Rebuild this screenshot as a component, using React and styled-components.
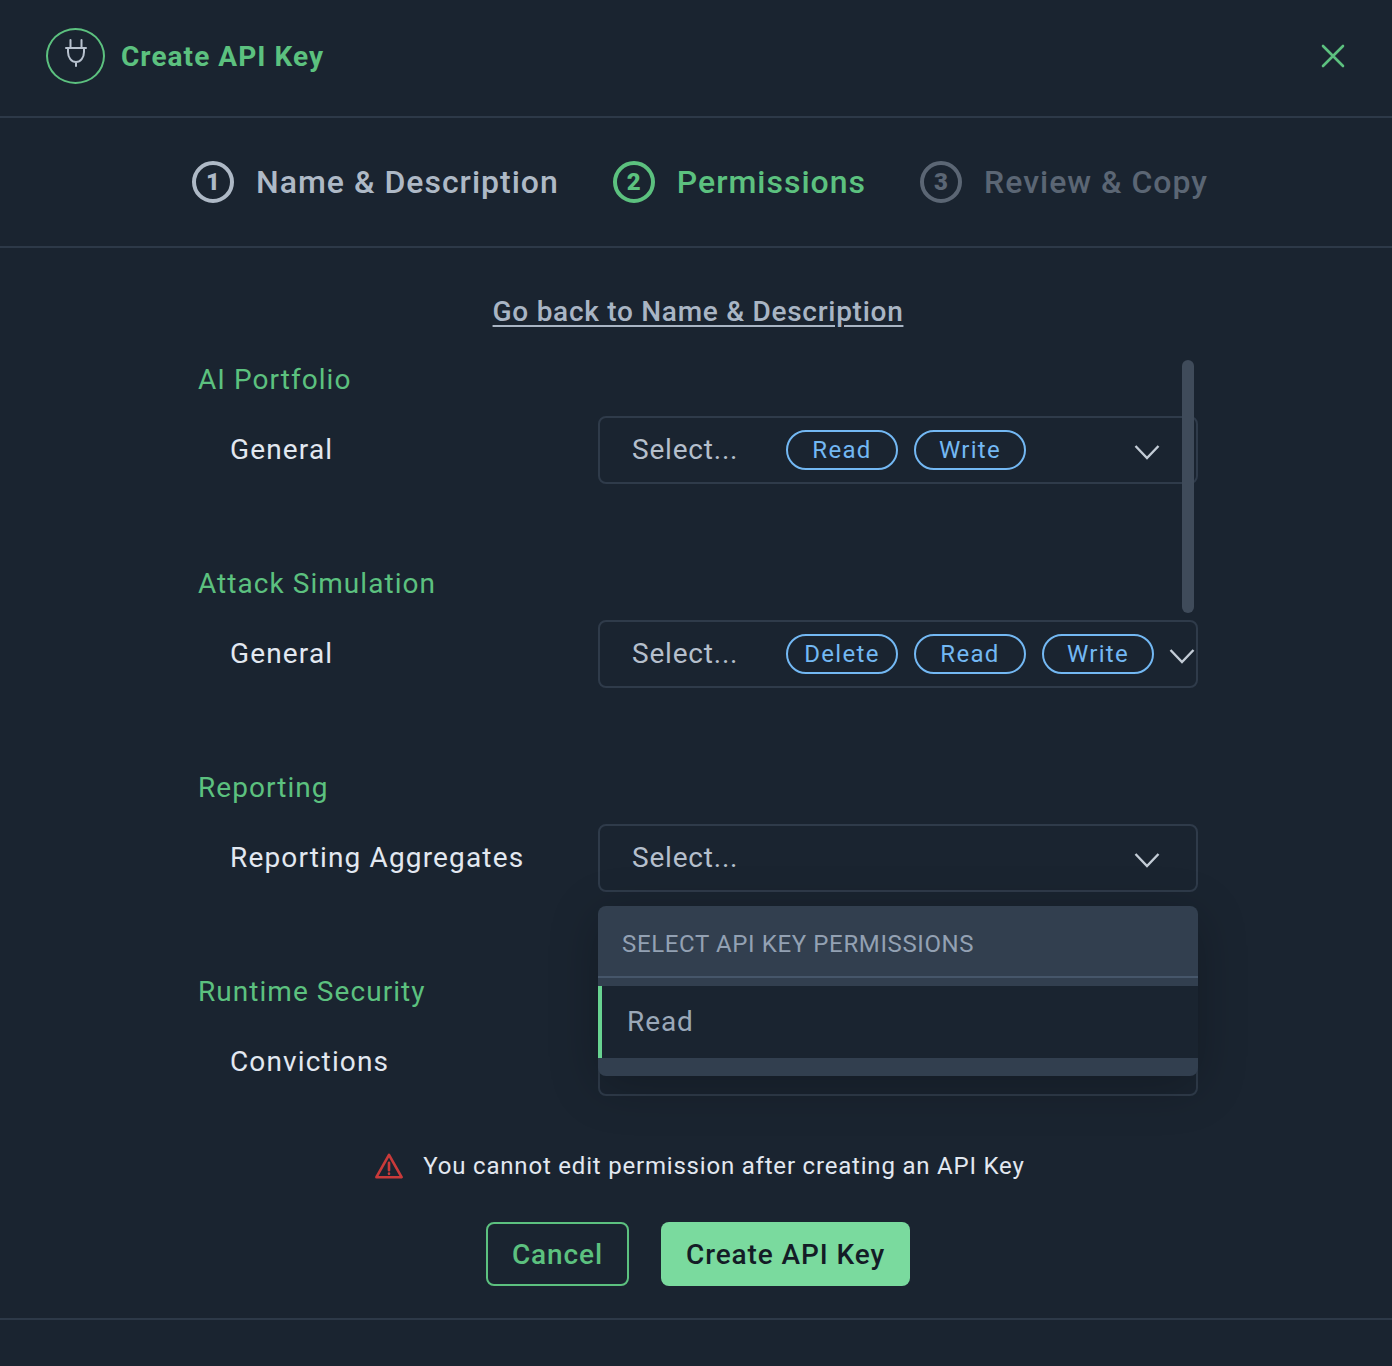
import React from 'react'
import styled, { createGlobalStyle } from 'styled-components'

const GlobalStyle = createGlobalStyle`
  html, body { margin: 0; padding: 0; background: #1a2430; }
  body { font-family: Roboto, "Liberation Sans", sans-serif; }
  * { box-sizing: border-box; }
`

const Page = styled.div`
  width: 1392px;
  height: 1366px;
  overflow: hidden;
  background: #1a2430;
  color: #e2e8f0;
`
const Header = styled.header`
  height: 118px;
  display: flex;
  align-items: center;
  padding: 0 46px 4px 46px;
  border-bottom: 2px solid #2d3948;
`
const PlugBadge = styled.div`
  width: 59px;
  height: 56px;
  border: 2px solid #5cc17f;
  border-radius: 50%;
  display: flex;
  align-items: center;
  justify-content: center;
  margin-right: 16px;
`
const Title = styled.h1`
  flex: 1;
  margin: 0;
  font-size: 28px;
  font-weight: 700;
  letter-spacing: 1.05px;
  color: #5cc17f;
`
const CloseButton = styled.button`
  border: 0;
  padding: 0;
  background: none;
  display: flex;
`
const Steps = styled.nav`
  height: 130px;
  display: flex;
  align-items: center;
  justify-content: center;
  gap: 54px;
  padding-left: 8px;
  border-bottom: 2px solid #2d3948;
`
const Step = styled.div`
  display: flex;
  align-items: center;
  gap: 22px;
  font-size: 32px;
  font-weight: 500;
  letter-spacing: 1px;
  color: ${p => p.$color};
`
const StepNumber = styled.span`
  width: 42px;
  height: 42px;
  border: 4px solid currentColor;
  border-radius: 50%;
  display: flex;
  align-items: center;
  justify-content: center;
  font-size: 24px;
  font-weight: 900;
  letter-spacing: 0;
`
const Content = styled.main`
  width: 1000px;
  margin-left: 198px;
`
const BackLink = styled.a`
  display: block;
  height: 112px;
  padding-top: 47px;
  text-align: center;
  font-size: 28px;
  font-weight: 500;
  line-height: 34px;
  letter-spacing: 0.72px;
  color: #a9b5c4;
  text-decoration: underline;
  text-underline-offset: 4px;
`
const Form = styled.div`
  position: relative;
  display: flex;
  flex-direction: column;
  gap: 80px;
`
const ScrollThumb = styled.div`
  position: absolute;
  top: 0;
  right: 4px;
  width: 12px;
  height: 253px;
  border-radius: 6px;
  background: #3f4b5a;
  z-index: 1;
`
const SectionTitle = styled.h2`
  margin: 0 0 16px;
  height: 40px;
  font-size: 28px;
  line-height: 40px;
  font-weight: 400;
  letter-spacing: 1.05px;
  color: #5cc17f;
`
const Row = styled.div`
  display: flex;
  align-items: center;
`
const RowLabel = styled.div`
  width: 400px;
  padding: 0 0 2px 32px;
  font-size: 28px;
  letter-spacing: 1.15px;
  color: #e2e8f0;
`
const Select = styled.div`
  position: relative;
  width: 600px;
  height: 68px;
  display: flex;
  align-items: center;
  padding: 0 36px 0 32px;
  border: 2px solid #2f3b4a;
  border-radius: 8px;
`
const Placeholder = styled.span`
  width: 154px;
  flex: none;
  padding-bottom: 2px;
  font-size: 28px;
  letter-spacing: 0.8px;
  color: #b5bfcc;
`
const Chips = styled.div`
  flex: 1 0 auto;
  display: flex;
  gap: 16px;
`
const Chip = styled.span`
  width: 112px;
  height: 40px;
  display: flex;
  align-items: center;
  justify-content: center;
  border: 2px solid #73b8f3;
  border-radius: 20px;
  font-size: 24px;
  letter-spacing: 1.3px;
  color: #73b8f3;
`
const Chevron = styled.svg`
  flex: none;
  margin: 3px 0 0 15px;
`
const Menu = styled.div`
  position: absolute;
  top: 80px;
  left: -2px;
  width: 600px;
  height: 170px;
  z-index: 2;
  border-radius: 8px;
  background: #323f4f;
  box-shadow: 0 10px 50px rgba(0, 0, 0, 0.24);
`
const MenuHeading = styled.div`
  height: 72px;
  display: flex;
  align-items: center;
  padding: 6px 0 0 24px;
  border-bottom: 2px solid #46566a;
  font-size: 24px;
  letter-spacing: 0.63px;
  color: #93a1b3;
`
const MenuOption = styled.div`
  height: 72px;
  margin-top: 8px;
  display: flex;
  align-items: center;
  padding: 0 0 2px 25px;
  border-left: 4px solid #68d391;
  background: #1a2430;
  font-size: 28px;
  letter-spacing: 0.9px;
  color: #9aa8b9;
`
const Warning = styled.div`
  margin-top: 52px;
  height: 36px;
  display: flex;
  align-items: center;
  justify-content: center;
  gap: 20px;
  padding-left: 4px;
  font-size: 24px;
  letter-spacing: 0.8px;
  color: #e2e8f0;
`
const Actions = styled.div`
  margin-top: 38px;
  display: flex;
  justify-content: center;
  gap: 32px;
`
const CancelButton = styled.button`
  width: 143px;
  height: 64px;
  border: 2px solid #5cc17f;
  border-radius: 8px;
  background: none;
  font-family: inherit;
  font-size: 28px;
  font-weight: 500;
  letter-spacing: 0.9px;
  color: #5cc17f;
`
const CreateButton = styled.button`
  width: 249px;
  height: 64px;
  border: 0;
  border-radius: 8px;
  background: #7ada9e;
  font-family: inherit;
  font-size: 28px;
  font-weight: 500;
  letter-spacing: 0.9px;
  color: #141c26;
`
const Footer = styled.div`
  margin-top: 32px;
  border-top: 2px solid #2d3948;
`

const sections = [
  { title: 'AI Portfolio', label: 'General', chips: ['Read', 'Write'] },
  { title: 'Attack Simulation', label: 'General', chips: ['Delete', 'Read', 'Write'] },
  { title: 'Reporting', label: 'Reporting Aggregates', chips: [], open: true },
  { title: 'Runtime Security', label: 'Convictions', chips: [], hidden: true },
]

const App = () => {
  return (
    <Page>
      <GlobalStyle />
      <Header>
        <PlugBadge>
          <svg width="24" height="28" viewBox="0 0 24 28" fill="none" stroke="#b8c2cf" strokeWidth="2" strokeLinecap="round" strokeLinejoin="round" style={{ marginTop: -6 }}>
            <path d="M6.500 1v8M17.500 1v8M2 9h20M4 9v4c0 5.500 3.500 10 8 10s8-4.500 8-10V9M12 23v4" />
          </svg>
        </PlugBadge>
        <Title>Create API Key</Title>
        <CloseButton aria-label="Close">
          <svg width="26" height="26" viewBox="0 0 26 26" fill="none" stroke="#5cc17f" strokeWidth="2.6" strokeLinecap="round">
            <path d="M3 3l20 20M23 3L3 23" />
          </svg>
        </CloseButton>
      </Header>
      <Steps>
        <Step $color="#aeb9c6"><StepNumber>1</StepNumber>Name &amp; Description</Step>
        <Step $color="#5cc17f"><StepNumber>2</StepNumber>Permissions</Step>
        <Step $color="#5b6674"><StepNumber>3</StepNumber>Review &amp; Copy</Step>
      </Steps>
      <Content>
        <BackLink>Go back to Name &amp; Description</BackLink>
        <Form>
          <ScrollThumb />
          {sections.map((s) => (
            <section key={s.title}>
              <SectionTitle>{s.title}</SectionTitle>
              <Row>
                <RowLabel>{s.label}</RowLabel>
                <Select>
                  {!s.hidden && <Placeholder>Select...</Placeholder>}
                  <Chips>
                    {s.chips.map((c) => <Chip key={c}>{c}</Chip>)}
                  </Chips>
                  {!s.hidden && (
                    <Chevron width="26" height="16" viewBox="0 0 26 16" fill="none" stroke="#c3ccd6" strokeWidth="2.4">
                      <path d="M1.500 2L13 14 24.500 2" />
                    </Chevron>
                  )}
                  {s.open && (
                    <Menu>
                      <MenuHeading>SELECT API KEY PERMISSIONS</MenuHeading>
                      <MenuOption>Read</MenuOption>
                    </Menu>
                  )}
                </Select>
              </Row>
            </section>
          ))}
        </Form>
        <Warning>
          <svg width="28" height="28" viewBox="0 0 30 30" fill="none" stroke="#c93a3a" strokeWidth="2.800" strokeLinejoin="round" strokeLinecap="round">
            <path d="M15 3L28.500 27H1.500L15 3ZM15 11.500v8M15 23v.4" />
          </svg>
          You cannot edit permission after creating an API Key
        </Warning>
        <Actions>
          <CancelButton>Cancel</CancelButton>
          <CreateButton>Create API Key</CreateButton>
        </Actions>
      </Content>
      <Footer />
    </Page>
  )
}

export default App
